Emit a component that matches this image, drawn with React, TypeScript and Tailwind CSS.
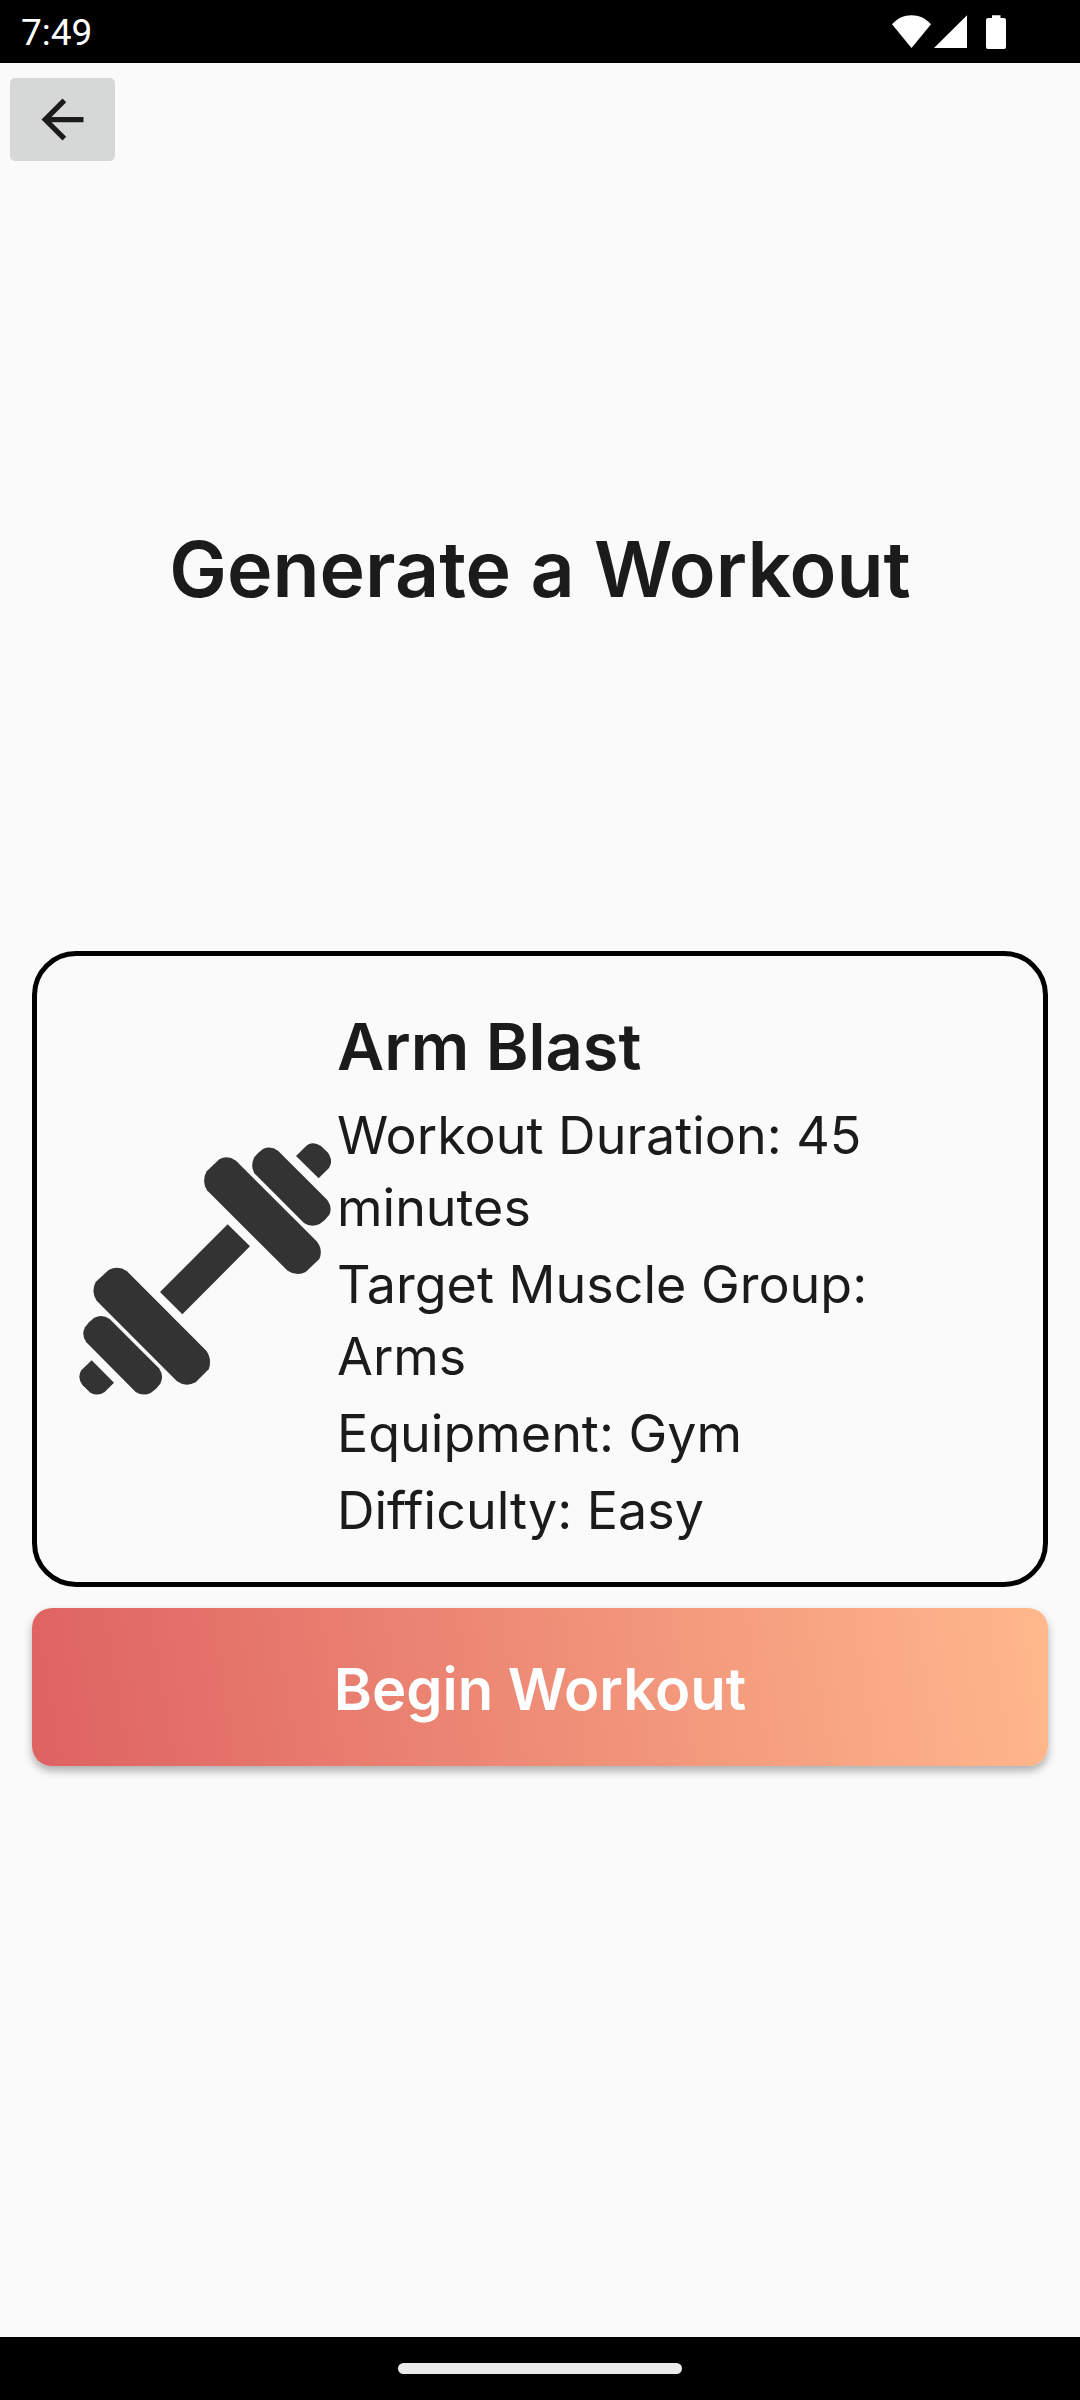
import { MdArrowBack } from "react-icons/md";

const details = [
  "Workout Duration: 45 minutes",
  "Target Muscle Group: Arms",
  "Equipment: Gym",
  "Difficulty: Easy",
];

function StatusBar() {
  return (
    <div className="flex h-[63px] items-center justify-between bg-black pr-[74px] pl-[21px] text-white">
      <span className="pt-0.5 font-[Roboto,sans-serif] text-[37px] leading-[44px]">7:49</span>
      <div className="flex items-center" aria-hidden="true">
        <svg className="h-[34px] w-[39px]" viewBox="0 0 39 34" fill="currentColor">
          <path d="M0 9.2C5.2 3.6 12 0.3 19.5 0.3S33.800 3.600 39 9.200L19.500 33Z" />
        </svg>
        <svg className="ml-[3px] h-[34px] w-[33px]" viewBox="0 0 33 34" fill="currentColor">
          <path d="M33 0.300V33H0Z" />
        </svg>
        <svg className="ml-[19px] h-[34px] w-5" viewBox="0 0 20 34" fill="currentColor">
          <path d="M6 0.300h8.500V3H18a2 2 0 0 1 2 2v27a2 2 0 0 1-2 2H2a2 2 0 0 1-2-2V5a2 2 0 0 1 2-2h4Z" />
        </svg>
      </div>
    </div>
  );
}

function Dumbbell() {
  return (
    <svg
      className="mb-2 h-[252px] w-[252px] shrink-0"
      viewBox="177 605 756 756"
      fill="#333333"
      aria-hidden="true"
    >
      <path d="M828 644L853 619Q875 596 903 614L924 634Q941 658 927 680L896 711Z" />
      <path d="M703 648Q715 632 730 622Q753 612 774 628L922 776Q938 798 928 820Q915 838 899 848Q874 860 852 845L703 696Q690 672 703 648Z" />
      <path d="M560 690L598 654Q622 640 648 658L890 900Q910 925 898 953L857 992Q830 1006 803 988L561 747Q544 719 560 690Z" />
      <path d="M623 849L690 915L487 1119L420 1052Z" />
      <path d="M227 1022L267 985Q296 972 321 990L559 1228Q577 1254 566 1284L527 1323Q498 1339 471 1320L230 1078Q212 1051 227 1022Z" />
      <path d="M195 1158Q206 1140 223 1129Q247 1117 269 1133L417 1281Q433 1304 421 1327Q408 1345 392 1355Q369 1366 347 1352L199 1203Q183 1181 195 1158Z" />
      <path d="M215 1257L282 1324L254 1352Q234 1366 211 1354L188 1332Q170 1308 184 1287Z" />
    </svg>
  );
}

export default function App() {
  return (
    <div className="flex min-h-screen flex-col bg-[#fafafa] font-[Inter,sans-serif] text-[#1b1b1b]">
      <StatusBar />
      <header className="px-2.5 pt-[15px]">
        <button
          type="button"
          aria-label="Back"
          className="flex h-[83px] w-[105px] items-center justify-center rounded-[5px] bg-[#d6d7d7]"
        >
          <MdArrowBack className="size-[63px]" />
        </button>
      </header>
      <main className="flex flex-col px-8">
        <h1 className="pt-[358px] pb-[332px] text-center text-[77px] leading-[100px] font-semibold">
          Generate a Workout
        </h1>
        <section className="flex items-center gap-1.5 rounded-[44px] border-5 border-black pt-[43px] pr-[140px] pb-[35px] pl-[42px]">
          <Dumbbell />
          <div className="flex min-w-0 flex-1 flex-col gap-[5px]">
            <h2 className="text-[65px] leading-[96px] font-semibold">Arm Blast</h2>
            {details.map((line) => (
              <p key={line} className="text-[52px] leading-[72px]">
                {line}
              </p>
            ))}
          </div>
        </section>
        <button
          type="button"
          className="mt-[21px] h-[158px] rounded-[20px] bg-[linear-gradient(81deg,#de6262,#ffb88c)] pt-1 text-[58px] leading-[80px] font-semibold text-white shadow-[0_5px_8px_rgba(0,0,0,0.3)]"
        >
          Begin Workout
        </button>
      </main>
      <footer className="mt-auto flex h-[63px] items-center justify-center bg-black">
        <div className="h-[11px] w-[284px] rounded-full bg-[#ebebeb]" />
      </footer>
    </div>
  );
}
